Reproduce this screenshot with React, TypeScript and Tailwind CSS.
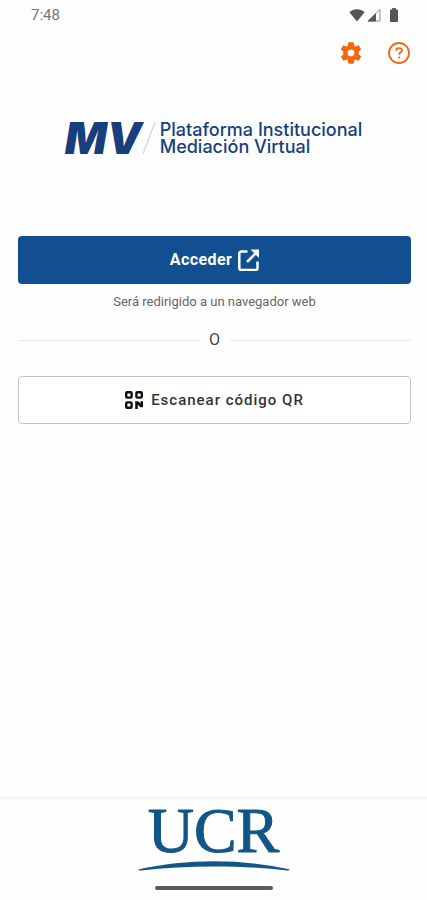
import React from "react";

const StatusBar = () => {
  return (
    <div className="flex h-[30px] items-center justify-between pl-[31px] pr-7 text-[#757575]">
      <span className="text-[15px] leading-5">7:48</span>
      <div className="flex items-center text-[#555555]">
        <svg width="16" height="14" viewBox="0 0 16 14" fill="currentColor" aria-hidden="true">
          <path d="M8 13.400.4 4.200C2.400 2.200 5 1.200 8 1.200s5.600 1 7.600 3z" />
        </svg>
        <svg className="ml-0.5" width="14" height="14" viewBox="0 0 14 14" aria-hidden="true">
          <path d="M13 1.500V13H1z" fill="none" stroke="#8a8a8a" strokeWidth="1" />
          <path d="M9 5.200V13.500H.3z" fill="currentColor" />
        </svg>
        <svg className="ml-2" width="10" height="14" viewBox="0 0 10 14" fill="currentColor" aria-hidden="true">
          <path d="M3.200 0h3.600v1.500H8c.6 0 1 .4 1 1V13c0 .6-.4 1-1 1H2c-.6 0-1-.4-1-1V2.500c0-.6.4-1 1-1h1.200z" />
        </svg>
      </div>
    </div>
  );
};

const Toolbar = () => {
  return (
    <div className="flex h-[46px] items-center justify-end gap-6 pr-4 text-[#f4660f]">
      <button type="button" aria-label="Ajustes">
        <svg width="24" height="24" viewBox="0 0 24 24" fill="currentColor">
          <path
            fillRule="evenodd"
            strokeLinejoin="round"
            stroke="currentColor"
            strokeWidth="1"
            d="M9.800 1.800h4.400l.6 3.100c.6.2 1.200.6 1.800 1l2.900-1.200 2.200 3.700-2.500 2.100v3l2.500 2.100-2.200 3.700-2.900-1.200c-.6.4-1.200.8-1.800 1l-.6 3.100H9.800l-.6-3.100c-.6-.2-1.200-.6-1.800-1l-2.900 1.200-2.200-3.700 2.500-2.100v-3L2.300 8.400l2.200-3.700 2.900 1.200c.6-.4 1.200-.8 1.800-1zM12 8a4 4 0 1 0 0 8 4 4 0 0 0 0-8z"
          />
        </svg>
      </button>
      <button type="button" aria-label="Ayuda">
        <svg width="24" height="24" viewBox="0 0 24 24" fill="none" stroke="currentColor" strokeWidth="1.800">
          <circle cx="12" cy="12" r="10" />
          <path d="M9 9.600c.1-1.600 1.300-2.500 3-2.500s3 .9 3 2.300c0 2-2.900 1.900-2.900 4.300" />
          <circle cx="12.100" cy="16.500" r="1.100" fill="currentColor" stroke="none" />
        </svg>
      </button>
    </div>
  );
};

const SiteLogo = () => {
  return (
    <div className="flex h-[124px] items-center justify-center font-['Inter',sans-serif] text-[#173f7d]">
      <span className="text-[44px] leading-8 font-black italic">MV</span>
      <svg width="14" height="34" viewBox="0 0 14 34" aria-hidden="true">
        <path d="M13 1 1 33" stroke="#c4c9d2" strokeWidth="1" />
      </svg>
      <p className="pl-1 text-[18px] leading-[17px] font-medium whitespace-nowrap">
        Plataforma Institucional
        <br />
        Mediación Virtual
      </p>
    </div>
  );
};

const Login = () => {
  return (
    <main className="flex grow flex-col pt-9 pr-4 pl-[18px]">
      <button
        type="button"
        className="flex h-12 items-center justify-center gap-1.5 rounded-sm bg-[#114f90] text-base font-bold tracking-wide text-white"
      >
        Acceder
        <svg width="21" height="22" viewBox="1 1 21 22" fill="none" stroke="currentColor" strokeWidth="2.500" aria-hidden="true">
          <path d="M10.500 3.500H4.300a2 2 0 0 0-2 2V20a2 2 0 0 0 2 2h14.200a2 2 0 0 0 2-2v-6.500" />
          <path d="M10 14 19 5" />
          <path d="M13.500 1.500H22V10z" fill="currentColor" stroke="none" />
        </svg>
      </button>
      <p className="mt-2 text-center text-[13px] leading-5 text-[#666666]">Será redirigido a un navegador web</p>
      <div className="mt-4 flex items-center gap-1.5 text-[#444444]">
        <div className="h-px grow bg-[#e8e8e8]"></div>
        <span className="px-1 text-base leading-6">O</span>
        <div className="h-px grow bg-[#e8e8e8]"></div>
      </div>
      <button
        type="button"
        className="mt-6 flex h-12 items-center justify-center gap-2 rounded-sm border border-[#c6c6c6] bg-white text-[15px] font-medium tracking-[1px] text-[#333333]"
      >
        <svg className="text-[#111111]" width="18" height="18" viewBox="0 0 18 18" aria-hidden="true">
          <g fill="none" stroke="currentColor" strokeWidth="2.400">
            <rect x="1.200" y="1.200" width="5.400" height="5.400" rx="1" />
            <rect x="11.400" y="1.200" width="5.400" height="5.400" rx="1" />
            <rect x="1.200" y="11.400" width="5.400" height="5.400" rx="1" />
          </g>
          <path d="M10.200 10.200h3l2.300 2.300v-2.300H18v6h-2.600l-2.600-2.400V18h-2.600z" fill="currentColor" />
        </svg>
        Escanear código QR
      </button>
    </main>
  );
};

const Footer = () => {
  return (
    <footer className="flex flex-col items-center border-t-4 border-[#f6f6f6] pb-2.5">
      <p className="mt-1.5 font-['Liberation_Serif',serif] text-[64px] leading-[50px] text-[#125688] [-webkit-text-stroke:1px_#125688]">
        UCR
      </p>
      <svg className="mt-1" width="154" height="12" viewBox="0 0 154 12" fill="#125688" aria-hidden="true">
        <path d="M1 9.500C50-1.500 104-1.500 153 9.500c-1 1-2 1.200-3 1C104 5 50 5 4 10.500c-1 .2-2 0-3-1z" />
      </svg>
      <div className="mt-3.5 h-1 w-[118px] rounded-full bg-[#5c5c5c]"></div>
    </footer>
  );
};

const App = () => {
  return (
    <div className="flex min-h-screen flex-col bg-[#fefefe] font-['Roboto',sans-serif]">
      <StatusBar />
      <Toolbar />
      <SiteLogo />
      <Login />
      <Footer />
    </div>
  );
};

export default App;
